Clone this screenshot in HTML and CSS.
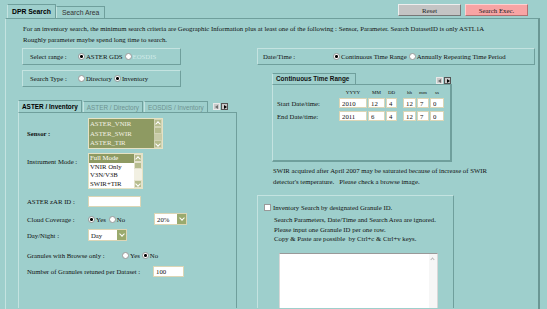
FILE: index.html
```html
<!DOCTYPE html>
<html lang="en">
<head>
    <meta charset="UTF-8">
    <title>DPR Search</title>
    <link rel="stylesheet" href="styles.css">
</head>
<body>
    <div class="topbar">
        <div class="tabs">
            <a class="tab active">DPR Search</a>
            <a class="tab">Search Area</a>
        </div>
        <div class="actions">
            <button class="btn btn-reset">Reset</button>
            <button class="btn btn-exec">Search Exec.</button>
        </div>
    </div>

    <div class="panel">
        <p class="intro">For an inventory search, the minimum search criteria are Geographic Information plus at least one of the following : Sensor, Parameter. Search DatasetID is only ASTL1A<br>Roughly parameter maybe spend long time to search.</p>

        <div class="columns">
            <!-- left column -->
            <div class="col-left">
                <div class="box">
                    <span class="box-label">Select range :</span>
                    <label class="opt"><input type="radio" class="radio" checked>ASTER GDS</label>
                    <label class="opt disabled"><input type="radio" class="radio">EOSDIS</label>
                </div>
                <div class="box">
                    <span class="box-label">Search Type :</span>
                    <label class="opt"><input type="radio" class="radio">Directory</label>
                    <label class="opt"><input type="radio" class="radio" checked>Inventory</label>
                </div>

                <div class="subtabs">
                    <a class="subtab active">ASTER / Inventory</a>
                    <a class="subtab">ASTER / Directory</a>
                    <a class="subtab">EOSDIS / Inventory</a>
                    <div class="arrows">
                        <span class="arrow arrow-left"></span>
                        <span class="arrow arrow-right"></span>
                    </div>
                </div>
                <div class="subpanel">
                    <div class="row row-sensor">
                        <span class="label bold">Sensor :</span>
                        <div class="listbox listbox-olive">
                            <div class="options">
                                <div>ASTER_VNIR</div>
                                <div>ASTER_SWIR</div>
                                <div>ASTER_TIR</div>
                            </div>
                            <div class="scrollbar">
                                <span class="sb-btn up"></span>
                                <span class="sb-thumb"></span>
                                <span class="sb-btn down"></span>
                            </div>
                        </div>
                    </div>
                    <div class="row row-mode">
                        <span class="label">Instrument Mode :</span>
                        <div class="listbox listbox-white">
                            <div class="options">
                                <div class="selected">Full Mode</div>
                                <div>VNIR Only</div>
                                <div>V3N/V3B</div>
                                <div>SWIR+TIR</div>
                            </div>
                            <div class="scrollbar">
                                <span class="sb-btn up"></span>
                                <span class="sb-thumb"></span>
                                <span class="sb-btn down"></span>
                            </div>
                        </div>
                    </div>
                    <div class="row row-zar">
                        <span class="label">ASTER zAR ID :</span>
                        <input type="text" class="field field-zar">
                    </div>
                    <div class="row row-cloud">
                        <span class="label">Cloud Coverage :</span>
                        <label class="opt"><input type="radio" class="radio" checked>Yes</label>
                        <label class="opt"><input type="radio" class="radio">No</label>
                        <div class="select select-cloud"><span>20%</span><span class="select-btn"></span></div>
                    </div>
                    <div class="row row-day">
                        <span class="label">Day/Night :</span>
                        <div class="select select-day"><span>Day</span><span class="select-btn"></span></div>
                    </div>
                    <div class="row row-browse">
                        <span class="label label-wide">Granules with Browse only :</span>
                        <label class="opt"><input type="radio" class="radio">Yes</label>
                        <label class="opt"><input type="radio" class="radio" checked>No</label>
                    </div>
                    <div class="row row-count">
                        <span class="label label-auto">Number of Granules retuned per Dataset :</span>
                        <input type="text" class="field field-count" value="100">
                    </div>
                </div>
            </div>

            <!-- right column -->
            <div class="col-right">
                <div class="box box-date">
                    <span class="box-label">Date/Time :</span>
                    <label class="opt"><input type="radio" class="radio" checked>Continuous Time Range</label>
                    <label class="opt"><input type="radio" class="radio">Annually Repeating Time Period</label>
                </div>

                <div class="ctr">
                    <div class="ctr-head">
                        <a class="ctr-tab">Continuous Time Range</a>
                        <div class="arrows">
                            <span class="arrow arrow-left"></span>
                            <span class="arrow arrow-right"></span>
                        </div>
                    </div>
                    <div class="ctr-body">
                        <div class="time-grid">
                            <span></span>
                            <span class="th">YYYY</span>
                            <span class="th">MM</span>
                            <span class="th">DD</span>
                            <span></span>
                            <span class="th">hh</span>
                            <span class="th">mm</span>
                            <span class="th">ss</span>

                            <span class="tl">Start Date/time:</span>
                            <input type="text" class="field" value="2010">
                            <input type="text" class="field" value="12">
                            <input type="text" class="field" value="4">
                            <span></span>
                            <input type="text" class="field" value="12">
                            <input type="text" class="field" value="7">
                            <input type="text" class="field" value="0">

                            <span class="tl">End Date/time:</span>
                            <input type="text" class="field" value="2011">
                            <input type="text" class="field" value="6">
                            <input type="text" class="field" value="4">
                            <span></span>
                            <input type="text" class="field" value="12">
                            <input type="text" class="field" value="7">
                            <input type="text" class="field" value="0">
                        </div>
                    </div>
                </div>

                <p class="note">SWIR acquired after April 2007 may be saturated because of increase of SWIR<br>detector's temperature.&nbsp;&nbsp; Please check a browse image.</p>

                <div class="granule-box">
                    <label class="granule-check"><input type="checkbox" class="check">Inventory Search by designated Granule ID.</label>
                    <p class="granule-help">Search Parameters, Date/Time and Search Area are ignored.<br>Please input one Granule ID per one row.<br>Copy &amp; Paste are possible&nbsp; by Ctrl+c &amp; Ctrl+v keys.</p>
                    <div class="textarea">
                        <div class="ta-scroll"><span class="ta-up"></span></div>
                    </div>
                </div>
            </div>
        </div>
    </div>
</body>
</html>
```

FILE: styles.css
```css
:root {
    --bg: #9ecfcc;
    --line: #6f9f9c;
    --light: #c4e3e0;
    --olive: #8e9a62;
    --olive-light: #b6bc8e;
    --field-border: #dcd6b6;
    --green-btn: #9aaa6e;
}

* {
    margin: 0;
    padding: 0;
    box-sizing: border-box;
}

body {
    background-color: var(--bg);
    color: #111;
    font-family: 'Liberation Serif', serif;
    font-size: 6.75px;
    line-height: 11px;
    height: 309px;
    overflow: hidden;
}

/* top tabs + buttons */
.topbar {
    display: flex;
    justify-content: space-between;
    align-items: flex-end;
    height: 18px;
    padding: 0 19px 0 7px;
}

.tabs {
    display: flex;
    align-items: flex-end;
}

.tab {
    font-family: 'Liberation Sans', sans-serif;
    font-size: 6.8px;
    height: 12px;
    line-height: 11px;
    padding: 0 5px;
    border: 1px solid var(--line);
    border-bottom: none;
    border-left-color: var(--light);
    color: #333;
}

.tab.active {
    height: 14px;
    line-height: 13px;
    font-weight: bold;
    color: #000;
    padding: 0 4px;
}

.actions {
    display: flex;
    gap: 4px;
    align-self: flex-start;
    margin-top: 4px;
}

.btn {
    width: 63px;
    height: 12px;
    font-family: 'Liberation Serif', serif;
    font-size: 6.8px;
    color: #222;
    border: 1px solid;
    border-color: #eeeeee #777777 #777777 #eeeeee;
}

.btn-reset {
    background-color: #c4c4c4;
}

.btn-exec {
    background-color: #f8a4a4;
    border-color: #ffd0d0 #b07070 #b07070 #ffd0d0;
}

/* main panel, runs off the bottom of the window */
.panel {
    margin-left: 5px;
    width: 535px;
    height: 291px;
    border: 1px solid var(--line);
    border-bottom: none;
    border-right: 2px solid #6a9794;
    border-left-color: var(--light);
    padding: 4px 0 0 12px;
}

.intro {
    margin-left: 5px;
}

.columns {
    display: grid;
    grid-template-columns: 219px 278px;
    column-gap: 20px;
    margin-top: 3px;
}

.box {
    height: 17px;
    display: flex;
    align-items: center;
    padding-left: 7px;
    border: 1px solid;
    border-color: var(--light) var(--line) var(--line) var(--light);
}

.col-left .box {
    margin-left: 4px;
    width: 159px;
}

.box + .box {
    margin-top: 5px;
}

.box-label {
    width: 48px;
}

.opt {
    display: flex;
    align-items: center;
    margin-right: 2px;
}

.opt.disabled {
    color: #d2ebe9;
}

.radio {
    appearance: none;
    width: 7px;
    height: 7px;
    margin-right: 1px;
    border-radius: 50%;
    background-color: #fff;
    border: 1px solid #999;
}

.radio:checked {
    background: radial-gradient(circle, #000 0 1.3px, #fff 1.6px);
}

.check {
    appearance: none;
    width: 7px;
    height: 7px;
    background-color: #fff;
    border: 1px solid #999;
    margin-right: 2px;
}

/* left sub tabs */
.subtabs {
    display: flex;
    align-items: flex-end;
    height: 12px;
    margin-top: 13px;
}

.subtab {
    font-family: 'Liberation Sans', sans-serif;
    font-size: 6.4px;
    height: 11px;
    line-height: 11px;
    padding: 0 3px;
    margin-right: 1px;
    border: 1px solid var(--line);
    border-bottom: none;
    border-left-color: var(--light);
    color: #6f9391;
}

.subtab.active {
    height: 12px;
    font-weight: bold;
    color: #000;
}

.arrows {
    display: flex;
    gap: 1px;
    margin-left: 4px;
    align-self: center;
}

.arrow {
    width: 7px;
    height: 7px;
    background-color: #c9c9c9;
    border: 1px solid #e8e8e8;
    position: relative;
}

.arrow::after {
    content: '';
    position: absolute;
    top: 1px;
    border-top: 2px solid transparent;
    border-bottom: 2px solid transparent;
}

.arrow-left::after {
    left: 1px;
    border-right: 3px solid #6c6c6c;
}

.arrow-right {
    border-color: #555;
}

.arrow-right::after {
    left: 2px;
    border-left: 3px solid #000;
}

.subpanel {
    width: 219px;
    height: 196px;
    border: 1px solid var(--line);
    border-bottom: none;
    border-left-color: var(--light);
    padding: 5px 0 0 8px;
}

.row {
    display: flex;
    align-items: center;
}

.label {
    width: 61px;
}

.label-wide {
    width: 95px;
}

.label-auto {
    width: 126px;
}

.bold {
    font-weight: bold;
}

.row-mode {
    align-items: flex-start;
    margin-top: 4px;
}

.row-mode .label {
    margin-top: 3px;
}

.row-zar {
    margin-top: 7px;
}

.row-cloud {
    margin-top: 6px;
}

.row-cloud .opt {
    margin-right: 3px;
}

.select-cloud {
    margin-left: 26px;
}

.row-day {
    margin-top: 4px;
}

.row-browse {
    margin-top: 9px;
}

.row-count {
    margin-top: 5px;
}

/* list boxes */
.listbox {
    display: flex;
    border: 1px solid #e6e2c4;
    line-height: 9.5px;
}

.options {
    flex: 1;
}

.options div {
    padding-left: 1px;
}

.listbox-olive {
    width: 75px;
    height: 31px;
    background-color: var(--olive);
    color: #f4f2e4;
}

.listbox-white {
    width: 55px;
    height: 36px;
    background-color: #fff;
    line-height: 8.6px;
}

.listbox-white .selected {
    background-color: var(--olive);
    color: #fff;
}

.scrollbar {
    width: 8px;
    display: flex;
    flex-direction: column;
    background-color: #f2f0e2;
}

.sb-btn {
    height: 8px;
    background-color: var(--olive-light);
    border: 1px solid #e4e2cc;
    position: relative;
}

.sb-btn::after {
    content: '';
    position: absolute;
    left: 1px;
    width: 3px;
    height: 3px;
    border-left: 1px solid #fff;
    border-top: 1px solid #fff;
}

.sb-btn.up::after {
    top: 2px;
    transform: rotate(45deg);
}

.sb-btn.down::after {
    top: 1px;
    transform: rotate(225deg);
}

.sb-thumb {
    height: 7px;
    background-color: var(--olive-light);
    border: 1px solid #e4e2cc;
}

.listbox-olive .scrollbar {
    background-color: #c8cba8;
}

.listbox-olive .sb-btn,
.listbox-olive .sb-thumb {
    border-color: #d2d4b6;
}

.sb-btn.down {
    margin-top: auto;
}

/* inputs */
.field {
    height: 10px;
    font-family: 'Liberation Serif', serif;
    font-size: 6.75px;
    color: #111;
    background-color: #fff;
    border: 1px solid var(--field-border);
    padding: 0 2px;
    outline: none;
}

.field-zar {
    width: 53px;
    height: 11px;
}

.field-count {
    width: 31px;
    height: 11px;
}

.select {
    display: flex;
    align-items: center;
    height: 12px;
    background-color: #fff;
    border: 1px solid var(--field-border);
    padding-left: 2px;
}

.select span:first-child {
    flex: 1;
}

.select-cloud {
    width: 33px;
}

.select-day {
    width: 39px;
}

.select-btn {
    width: 9px;
    height: 10px;
    background-color: var(--green-btn);
    position: relative;
}

.select-btn::after {
    content: '';
    position: absolute;
    left: 3px;
    top: 2px;
    width: 3px;
    height: 3px;
    border-right: 1px solid #fff;
    border-bottom: 1px solid #fff;
    transform: rotate(45deg);
}

/* right column */
.box-date {
    width: 278px;
    padding-left: 5px;
}

.box-date .box-label {
    width: 70px;
}

.ctr {
    width: 180px;
    margin: 8px 0 0 15px;
}

.ctr-head {
    display: flex;
    justify-content: space-between;
    align-items: flex-end;
    height: 11px;
}

.ctr-tab {
    font-family: 'Liberation Sans', sans-serif;
    font-size: 6.4px;
    font-weight: bold;
    width: 84px;
    height: 11px;
    line-height: 10px;
    padding-left: 3px;
    border: 1px solid var(--line);
    border-bottom: none;
    border-left-color: var(--light);
}

.ctr-head .arrows {
    margin-right: 1px;
    align-self: flex-start;
    margin-top: 4px;
}

.ctr-body {
    height: 78px;
    border: 1px solid var(--line);
    border-left-color: var(--light);
    border-right-width: 2px;
    border-bottom-width: 2px;
    padding: 4px 0 0 4px;
}

.time-grid {
    display: grid;
    grid-template-columns: 61px 28px 17px 11px 4px 13px 12px 14px;
    grid-template-rows: 7px 10px 10px;
    column-gap: 1px;
    row-gap: 2px;
    align-items: center;
}

.time-grid .field {
    width: 100%;
}

.th {
    font-size: 5px;
    line-height: 7px;
    text-align: center;
}

.time-grid > :nth-child(n+17) {
    margin-top: 2px;
}

.note {
    margin: 3px 0 0 16px;
}

.granule-box {
    width: 197px;
    height: 113px;
    margin-top: 8px;
    border: 1px solid var(--line);
    border-bottom: none;
    border-left-color: var(--light);
    border-top-color: var(--light);
    padding: 6px 0 0 6px;
    overflow: hidden;
}

.granule-check {
    display: flex;
    align-items: center;
}

.granule-help {
    margin: 2px 0 0 10px;
    line-height: 9.5px;
}

.textarea {
    width: 159px;
    height: 60px;
    margin: 9px 0 0 15px;
    background-color: #fff;
    border: 1px solid #d8d8d8;
    border-top-color: #999;
    border-bottom: none;
    display: flex;
    justify-content: flex-end;
}

.ta-scroll {
    width: 8px;
    background-color: #f6f6f6;
    position: relative;
}

.ta-up {
    position: absolute;
    top: 4px;
    left: 2px;
    width: 3px;
    height: 3px;
    border-left: 1px solid #bbb;
    border-top: 1px solid #bbb;
    transform: rotate(45deg);
}
```
